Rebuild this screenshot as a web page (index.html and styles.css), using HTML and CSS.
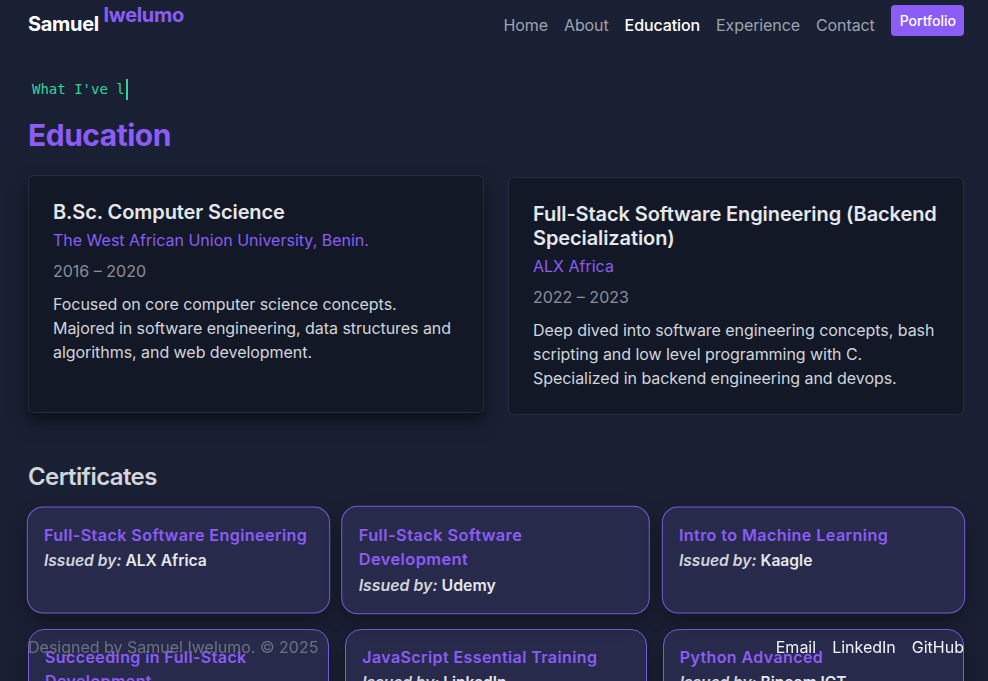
FILE: index.html
```html
<!DOCTYPE html>
<html lang="en">
<head>
<meta charset="utf-8">
<title>Samuel Iwelumo — Education</title>
<link rel="stylesheet" href="styles.css">
</head>
<body>
<header class="site-header">
  <a class="logo" href="#">Samuel <sup class="logo-accent">Iwelumo</sup></a>
  <nav class="nav">
    <a class="nav-link" href="#">Home</a>
    <a class="nav-link" href="#">About</a>
    <a class="nav-link active" href="#">Education</a>
    <a class="nav-link" href="#">Experience</a>
    <a class="nav-link" href="#">Contact</a>
    <a class="nav-btn" href="#">Portfolio</a>
  </nav>
</header>

<main class="main">
  <div class="typing"><span class="typing-text">What I've l</span></div>
  <h1 class="page-title">Education</h1>

  <section class="edu-grid">
    <article class="edu-card lifted">
      <h3 class="edu-title">B.Sc. Computer Science</h3>
      <p class="edu-school">The West African Union University, Benin.</p>
      <p class="edu-dates">2016 – 2020</p>
      <p class="edu-desc">Focused on core computer science concepts. Majored in software engineering, data structures and algorithms, and web development.</p>
    </article>
    <article class="edu-card">
      <h3 class="edu-title">Full-Stack Software Engineering (Backend Specialization)</h3>
      <p class="edu-school">ALX Africa</p>
      <p class="edu-dates">2022 – 2023</p>
      <p class="edu-desc">Deep dived into software engineering concepts, bash scripting and low level programming with C. Specialized in backend engineering and devops.</p>
    </article>
  </section>

  <h2 class="section-title">Certificates</h2>
  <section class="cert-grid">
    <div class="cert-card grow-sm">
      <h4 class="cert-title">Full-Stack Software Engineering</h4>
      <p class="cert-issuer"><em>Issued by:</em> ALX Africa</p>
    </div>
    <div class="cert-card grow-md">
      <h4 class="cert-title">Full-Stack Software Development</h4>
      <p class="cert-issuer"><em>Issued by:</em> Udemy</p>
    </div>
    <div class="cert-card grow-sm">
      <h4 class="cert-title">Intro to Machine Learning</h4>
      <p class="cert-issuer"><em>Issued by:</em> Kaagle</p>
    </div>
    <div class="cert-card">
      <h4 class="cert-title">Succeeding in Full-Stack Development</h4>
      <p class="cert-issuer"><em>Issued by:</em> Coursera</p>
    </div>
    <div class="cert-card">
      <h4 class="cert-title">JavaScript Essential Training</h4>
      <p class="cert-issuer"><em>Issued by:</em> LinkedIn</p>
    </div>
    <div class="cert-card">
      <h4 class="cert-title">Python Advanced</h4>
      <p class="cert-issuer"><em>Issued by:</em> Bincom ICT</p>
    </div>
  </section>
</main>

<footer class="site-footer">
  <p class="credit">Designed by Samuel Iwelumo. © 2025</p>
  <div class="footer-links">
    <a href="#">Email</a>
    <a href="#">LinkedIn</a>
    <a href="#">GitHub</a>
  </div>
</footer>
</body>
</html>
```

FILE: styles.css
```css
* { box-sizing: border-box; }

html, body {
  margin: 0;
  padding: 0;
}

body {
  background: #1a2033;
  color: #e5e7eb;
  font-family: Inter, "Noto Sans", "Liberation Sans", sans-serif;
  font-size: 16px;
  line-height: 24px;
  height: 681px;
  overflow: hidden;
}

a { text-decoration: none; color: inherit; }
p, h1, h2, h3, h4 { margin: 0; }

/* header */
.site-header {
  display: flex;
  justify-content: space-between;
  align-items: flex-start;
  padding: 5px 24px 0 28px;
}

.logo {
  margin-top: 5px;
  font-size: 20px;
  line-height: 28px;
  font-weight: 700;
  color: #ffffff;
  letter-spacing: -0.3px;
}

.logo-accent {
  color: #8b5cf6;
  font-size: 20px;
  vertical-align: 9px;
  line-height: 0;
  margin-left: 0;
  letter-spacing: -0.3px;
}

.nav {
  display: flex;
  align-items: flex-start;
  gap: 16px;
}

.nav-link {
  margin-top: 8px;
  font-size: 16px;
  line-height: 24px;
  color: #9ca3af;
  letter-spacing: -0.1px;
}

.nav-link.active { color: #ffffff; font-weight: 500; }

.nav-btn {
  margin-left: 0;
  background: #8b5cf6;
  color: #ffffff;
  font-size: 14px;
  font-weight: 500;
  line-height: 19px;
  padding: 6px 8px 6px 9px;
  border-radius: 4px;
}

/* main */
.main {
  padding: 0 24px 0 28px;
}

.typing {
  margin-top: 41px;
  height: 21px;
  padding-left: 4px;
  display: flex;
}

.typing-text {
  font-family: "DejaVu Sans Mono", "Liberation Mono", monospace;
  font-size: 14px;
  line-height: 21px;
  color: #34d399;
  border-right: 2px solid #34d399;
  padding-right: 1px;
}

.page-title {
  margin-top: 17px;
  font-size: 30px;
  line-height: 36px;
  font-weight: 700;
  color: #8b5cf6;
  letter-spacing: -0.5px;
}

.edu-grid {
  margin-top: 24px;
  display: grid;
  grid-template-columns: 1fr 1fr;
  gap: 24px;
}

.edu-card {
  background: #121826;
  border: 1px solid #262e3e;
  border-radius: 6px;
  padding: 24px;
}

.edu-card.lifted {
  transform: translateY(-2px);
  box-shadow: 0 10px 20px rgba(0, 0, 0, 0.35), 0 4px 8px rgba(0, 0, 0, 0.2);
}

.edu-title {
  font-size: 20px;
  line-height: 24px;
  font-weight: 600;
  color: #e5e7eb;
  letter-spacing: -0.1px;
}

.edu-school {
  margin-top: 4px;
  color: #8b5cf6;
}

.edu-dates {
  margin-top: 7px;
  color: #8b8f99;
}

.edu-desc {
  margin-top: 9px;
  color: #d1d5db;
  letter-spacing: -0.05px;
}

.section-title {
  margin-top: 46px;
  font-size: 24px;
  line-height: 32px;
  font-weight: 600;
  color: #d1d5db;
  letter-spacing: -0.6px;
}

.cert-grid {
  margin-top: 14px;
  display: grid;
  grid-template-columns: repeat(3, 1fr);
  gap: 16px;
}

.cert-card {
  background: #272a4b;
  border: 1px solid #7b5ad9;
  border-radius: 16px;
  padding: 15px 16px;
  box-shadow: 0 8px 18px rgba(0, 0, 0, 0.3);
}

.cert-card.grow-sm { transform: scale(1.008); }
.cert-card.grow-md { transform: scale(1.025); }

.cert-title {
  font-size: 16px;
  line-height: 24px;
  font-weight: 600;
  color: #8b5cf6;
  letter-spacing: 0.4px;
  margin-bottom: 2px;
}

.cert-issuer {
  font-size: 15.5px;
  line-height: 24px;
  font-weight: 600;
  color: #e5e7eb;
}

.cert-issuer em {
  color: #d1d5db;
  font-style: italic;
}

/* footer */
.site-footer {
  position: fixed;
  left: 0;
  right: 0;
  bottom: 0;
  display: flex;
  justify-content: space-between;
  align-items: center;
  padding: 0 24px 22px 28px;
  pointer-events: none;
}

.credit {
  color: #6b7280;
}

.footer-links {
  display: flex;
  gap: 16px;
  color: #f3f4f6;
}
```
